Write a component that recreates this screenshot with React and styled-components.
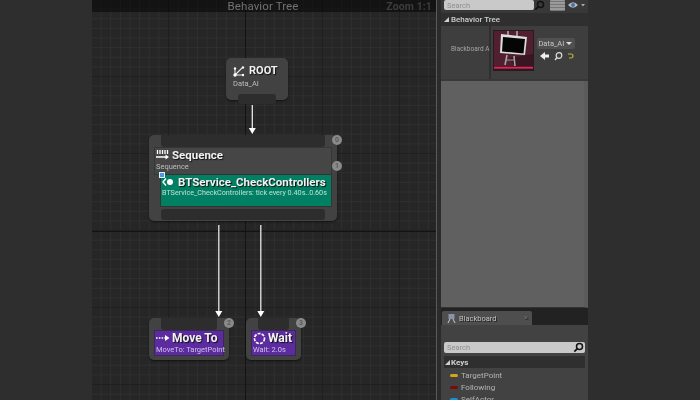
import React from "react";
import styled, { createGlobalStyle } from "styled-components";

const Global = createGlobalStyle`
  html, body { margin: 0; padding: 0; background: #2e2e2e; }
  body { width: 700px; height: 400px; overflow: hidden; font-family: Roboto, "Liberation Sans", sans-serif; }
`;

const Page = styled.div`
  width: 700px; height: 400px; display: flex; overflow: hidden;
  background: #2e2e2e; filter: blur(0.5px);
`;
const Letterbox = styled.div`
  flex: 0 0 ${p => p.$w}px; background: #2e2e2e;
`;
const Graph = styled.div`
  flex: 0 0 344px; position: relative; overflow: hidden;
  background-color: #262626;
  background-image:
    linear-gradient(90deg, #131313 1px, transparent 1px),
    linear-gradient(0deg, #131313 1px, transparent 1px),
    linear-gradient(90deg, #1f1f1f 1px, transparent 1px),
    linear-gradient(0deg, #1f1f1f 1px, transparent 1px),
    linear-gradient(90deg, #2f2f2f 1px, transparent 1px),
    linear-gradient(0deg, #2f2f2f 1px, transparent 1px);
  background-size: 1px 100%, 100% 1px, 77px 77px, 77px 77px, 9.625px 9.625px, 9.625px 9.625px;
  background-position: 153px 0, 0 231px, -1px 0, 0 0, -1px 0, 0 0;
  background-repeat: no-repeat, no-repeat, repeat, repeat, repeat, repeat;
`;
const TitleBar = styled.div`
  height: 12px; background: rgba(0,0,0,.5); position: relative;
  display: flex; justify-content: center; align-items: flex-end;
`;
const GraphTitle = styled.div`
  font-size: 11.5px; line-height: 14px; color: #727272; letter-spacing: .1px; margin-bottom: -1px;
  transform: translateX(-1px);
`;
const ZoomLabel = styled.div`
  position: absolute; right: 4px; top: 0; font-size: 10.5px; line-height: 14px; font-weight: 700;
  color: #3c3c3c; letter-spacing: .1px;
`;
const Wires = styled.svg`
  position: absolute; inset: 0; width: 344px; height: 400px;
`;
const Node = styled.div`
  position: absolute; left: ${p => p.$x}px; top: ${p => p.$y}px; width: ${p => p.$w}px; height: ${p => p.$h}px;
  background: #424242; border-radius: 5px; box-shadow: 0 1px 2px rgba(0,0,0,.55);
  display: flex; flex-direction: column; align-items: stretch; box-sizing: border-box; padding: 0 5px;
`;
const PinBar = styled.div`
  height: ${p => p.$h}px; margin: 0 7px; background: #2d2d2d; flex: none;
  border-radius: ${p => p.$top ? "0 0 3px 3px" : "3px"};
`;
const Composite = styled.div`
  height: 28px; flex: none; background: #464646; border: 1px solid #363636; box-sizing: border-box;
  padding: 0 0 0 1px;
`;
const TitleRow = styled.div`
  display: flex; align-items: center; gap: ${p => p.$gap || 4}px; height: ${p => p.$h || 14}px;
`;
const NodeTitle = styled.div`
  font-weight: 700; font-size: ${p => p.$size || 12}px; line-height: 14px; color: #f2f2f2; white-space: nowrap;
  text-shadow: 1px 1px 1px #111;
`;
const Sub = styled.div`
  font-size: ${p => p.$size || 7.5}px; line-height: ${p => p.$lh || 9}px; color: ${p => p.$color || "#bdbdbd"}; white-space: nowrap;
`;
const RootBox = styled.div`
  height: 30px; flex: none; padding: 6px 1px 0 2px;
`;
const Service = styled.div`
  height: 33px; flex: none; margin: -1px 0 2px 6px; background: #007f63; border: 1px solid #333; box-sizing: border-box;
  position: relative; padding-left: 1px;
`;
const Marker = styled.div`
  position: absolute; left: -2px; top: -3px; width: 4px; height: 4px; background: #5f8fe8; border: 0.5px solid #cfe;
`;
const Task = styled.div`
  height: 26px; flex: none; background: #5b2b9f; border: 1px solid #392a52; box-sizing: border-box; padding: 0 0 0 1px;
`;
const Badge = styled.div`
  position: absolute; right: ${p => -p.$out}px; top: ${p => p.$top}px; width: 10px; height: 10px; border-radius: 50%;
  background: #8a8a8a; color: #5a5a5a; font-size: 7px; line-height: 10px; text-align: center; font-weight: 700;
`;
const Splitter = styled.div`
  flex: 0 0 5px; background: #2b2b2b; border-left: 1px solid #5a5a5a; box-sizing: border-box;
`;
const Side = styled.div`
  flex: 0 0 147px; display: flex; flex-direction: column; background: #333; overflow: hidden;
`;
const TopRow = styled.div`
  height: 13px; flex: none; display: flex; align-items: flex-start; padding-left: 3px; background: #383838;
`;
const SearchBox = styled.div`
  flex: ${p => p.$w ? `0 0 ${p.$w}px` : 1}; height: ${p => p.$h}px; background: #c9c9c9; border-radius: 2px; box-sizing: border-box;
  display: flex; align-items: center; justify-content: space-between;
  padding: 0 1px 0 3px; color: #8f8f8f; font-size: 7.5px; line-height: 11px;
`;
const MagnifierWrap = styled.svg`
  width: 11px; height: 11px; flex: none;
`;
const GridBtn = styled.div`
  flex: 0 0 15px; height: 11px; margin-left: 5px; background: #9a9a9a; border-radius: 1px;
  background-image: repeating-linear-gradient(0deg, #777 0 1px, transparent 1px 3px);
`;
const EyeWrap = styled.svg`
  width: 20px; height: 8px; margin: 1px 0 0 3px; flex: none;
`;
const SectionHead = styled.div`
  height: 13px; flex: none; background: #2f2f2f; display: flex; align-items: center; gap: 2px; padding-left: 3px;
  font-size: 8px; font-weight: 500; color: #cfcfcf;
`;
const Tri = styled.span`
  width: 0; height: 0; border-style: solid; border-width: 0 0 5px 5px; border-color: transparent transparent #cfcfcf transparent;
  flex: none;
`;
const DetailRow = styled.div`
  height: 53px; flex: none; display: flex; background: #3e3e3e; border-bottom: 2px solid #383838;
`;
const RowLabel = styled.div`
  flex: 0 0 50px; box-sizing: border-box; border-right: 2px solid #2f2f2f; white-space: nowrap;
  font-size: 6.5px; line-height: 10px; color: #a4a4a4; padding: 18px 0 0 10px;
`;
const ThumbWrap = styled.svg`
  width: 41px; height: 41px; margin: 4px 3px 0 2px; flex: none;
`;
const ThumbTools = styled.div`
  display: flex; flex-direction: column; gap: 2px; padding-top: 12px;
`;
const Combo = styled.div`
  width: 38px; height: 11px; background: #505050; border-radius: 2px; display: flex; align-items: center; justify-content: space-between;
  font-size: 7.5px; color: #c8c8c8; padding: 0 3px 0 1px; box-sizing: border-box;
`;
const ComboArrow = styled.span`
  width: 0; height: 0; border-left: 3px solid transparent; border-right: 3px solid transparent; border-top: 3px solid #ddd;
`;
const ToolIcons = styled.svg`
  width: 38px; height: 10px;
`;
const Blank = styled.div`
  flex: 0 0 227px; background: #606060; border-right: 4px solid #5b5b5b; box-sizing: border-box;
  border-bottom: 1px solid #333;
`;
const TabStrip = styled.div`
  height: 17px; flex: none; background: #222; display: flex; align-items: flex-end; padding-left: 1px;
`;
const Tab = styled.div`
  width: 90px; height: 14px; background: #4e4e4e; border-radius: 2px 2px 0 0; display: flex; align-items: center; gap: 3px;
  padding: 0 4px 0 5px; box-sizing: border-box; font-size: 7.5px; color: #c2c2c2; text-shadow: 1px 1px 0 #222;
`;
const TabClose = styled.span`
  margin-left: auto; color: #6c6c6c; font-size: 8px; line-height: 10px;
`;
const Board = styled.div`
  flex: 1; background: #424242; padding: 17px 3px 0 3px; display: flex; flex-direction: column; overflow: hidden;
`;
const KeysHead = styled(SectionHead)`
  margin-top: 3px; height: 12px; font-weight: 700; padding-left: 1px; gap: 1px;
`;
const KeyList = styled.div`
  display: flex; flex-direction: column; padding: 0 0 0 6px; margin-top: 1px;
`;
const KeyRow = styled.div`
  height: 12px; display: flex; align-items: center; gap: 3px; font-size: 8px; color: #b4b4b4; flex: none;
`;
const KeyPill = styled.span`
  width: 8px; height: 3px; background: ${p => p.$c}; border-radius: 1.5px; flex: none;
`;

const Magnifier = () => (
  <MagnifierWrap viewBox="0 0 11 11">
    <circle cx="6.5" cy="4.5" r="3" fill="none" stroke="#111" strokeWidth="1.5" />
    <path d="M4.3 6.7 1.3 9.7" stroke="#111" strokeWidth="1.8" />
  </MagnifierWrap>
);

const Arrow = ({ x, y1, y2 }) => (
  <g>
    <line x1={x} x2={x} y1={y1} y2={y2 - 5} stroke="#e8e8e8" strokeWidth="1.3" />
    <path d={`M${x - 3.5} ${y2 - 6} H${x + 3.5} L${x} ${y2} Z`} fill="#fff" />
  </g>
);

const RootIcon = () => (
  <svg width="12" height="12" viewBox="0 0 12 12" style={{ flex: "none" }}>
    <path d="M2 10 9 3M2 10h7M2 10V4" stroke="#e8e8e8" strokeWidth="1.1" fill="none" />
    <circle cx="2" cy="10" r="1.7" fill="#fff" /><circle cx="10" cy="2.5" r="1.2" fill="#fff" /><circle cx="10" cy="10" r="1.2" fill="#fff" /><circle cx="2" cy="3.5" r="1.2" fill="#fff" />
  </svg>
);
const SeqIcon = () => (
  <svg width="14" height="12" viewBox="0 0 14 12" style={{ flex: "none" }}>
    <path d="M1.5 1v4M4 1v4M6.5 1v4M9 1v4M11.5 1v4" stroke="#fff" strokeWidth="1.3" />
    <path d="M0 8h10" stroke="#fff" strokeWidth="1.5" />
    <path d="M9.5 5.500 13 8l-3.500 2.500Z" fill="#fff" />
  </svg>
);
const ServiceIcon = () => (
  <svg width="12" height="10" viewBox="0 0 12 10" style={{ flex: "none" }}>
    <path d="M4 1.500 1 5l3 3.500" stroke="#fff" strokeWidth="1.4" fill="none" />
    <circle cx="8" cy="5" r="3" fill="#fff" />
  </svg>
);
const MoveIcon = () => (
  <svg width="14" height="8" viewBox="0 0 14 8" style={{ flex: "none" }}>
    <path d="M0 4h9" stroke="#fff" strokeWidth="1.4" strokeDasharray="1.6 1.2" />
    <path d="M9 1 13.500 4 9 7Z" fill="#fff" />
  </svg>
);
const WaitIcon = () => (
  <svg width="13" height="13" viewBox="0 0 13 13" style={{ flex: "none" }}>
    <circle cx="6.5" cy="6.5" r="5" stroke="#fff" strokeWidth="1.6" fill="none" strokeDasharray="3 1.2" />
  </svg>
);

const Thumb = () => (
  <ThumbWrap viewBox="0 0 41 41">
    <rect width="41" height="41" fill="#2a1a1e" />
    <rect x="1" y="1" width="39" height="38" fill="#521f30" />
    <path d="M16 28 40 24V36H22Z" fill="#3a1522" />
    <path d="M15 1v5M24 1v5" stroke="#bbb" strokeWidth="1.4" />
    <path d="M8 4 34 7 32 25 7 23Z" fill="#ddd" />
    <path d="M10 7 32 9 30.500 23.500 9 21.500Z" fill="#050505" />
    <path d="M14 25 12 35M21 26 22 36" stroke="#aaa" strokeWidth="1.5" />
    <path d="M13 30h9" stroke="#999" strokeWidth="1" />
    <rect x="1" y="37" width="39" height="1.5" fill="#ef1f5e" />
  </ThumbWrap>
);

export default function App() {
  return (
    <Page>
      <Global />
      <Letterbox $w={92} />
      <Graph>
        <TitleBar>
          <GraphTitle>Behavior Tree</GraphTitle>
          <ZoomLabel>Zoom 1:1</ZoomLabel>
        </TitleBar>
        <Wires viewBox="0 0 344 400">
          <Arrow x={160.3} y1={105} y2={134} />
          <Arrow x={126.8} y1={225} y2={317} />
          <Arrow x={168.8} y1={225} y2={317} />
        </Wires>

        <Node $x={134} $y={58} $w={62} $h={42}>
          <RootBox>
            <TitleRow $gap={4}>
              <RootIcon />
              <NodeTitle $size={11}>ROOT</NodeTitle>
            </TitleRow>
            <Sub $lh={11}>Data_AI</Sub>
          </RootBox>
          <PinBar $h={10} />
        </Node>

        <Node $x={57} $y={135} $w={188} $h={86}>
          <PinBar $h={12} $top />
          <Composite>
            <TitleRow $gap={2} $h={14}>
              <SeqIcon />
              <NodeTitle $size={11.5}>Sequence</NodeTitle>
            </TitleRow>
            <Sub>Sequence</Sub>
          </Composite>
          <Service>
            <Marker />
            <TitleRow $gap={4} $h={13}>
              <ServiceIcon />
              <NodeTitle $size={11.5}>BTService_CheckControllers</NodeTitle>
            </TitleRow>
            <Sub $size={7.2} $color="#bfe0d5">BTService_CheckControllers: tick every 0.40s..0.60s</Sub>
          </Service>
          <PinBar $h={11} />
          <Badge $out={5} $top={0}>0</Badge>
          <Badge $out={5} $top={26}>1</Badge>
        </Node>

        <Node $x={57} $y={318} $w={80} $h={42}>
          <PinBar $h={12} $top />
          <Task>
            <TitleRow $gap={2} $h={14}>
              <MoveIcon />
              <NodeTitle>Move To</NodeTitle>
            </TitleRow>
            <Sub $color="#d2c0ea">MoveTo: TargetPoint</Sub>
          </Task>
          <Badge $out={5} $top={0}>2</Badge>
        </Node>

        <Node $x={154} $y={318} $w={55} $h={42}>
          <PinBar $h={12} $top />
          <Task>
            <TitleRow $gap={2} $h={14}>
              <WaitIcon />
              <NodeTitle>Wait</NodeTitle>
            </TitleRow>
            <Sub $color="#d2c0ea">Wait: 2.0s</Sub>
          </Task>
          <Badge $out={5} $top={0}>3</Badge>
        </Node>
      </Graph>
      <Splitter />
      <Side>
        <TopRow>
          <SearchBox $w={90} $h={10}>
            <span>Search</span>
          </SearchBox>
          <Magnifier />
          <GridBtn />
          <EyeWrap viewBox="0 0 20 8">
            <path d="M0 4Q5-1.500 10 4 5 9.500 0 4Z" fill="#b4bcc8" />
            <circle cx="5" cy="4" r="2" fill="#4f6f9f" />
            <path d="M13 3h4l-2 2.500Z" fill="#aaa" />
          </EyeWrap>
        </TopRow>
        <SectionHead><Tri />Behavior Tree</SectionHead>
        <DetailRow>
          <RowLabel>Blackboard A</RowLabel>
          <Thumb />
          <ThumbTools>
            <Combo>Data_AI<ComboArrow /></Combo>
            <ToolIcons viewBox="0 0 38 10">
              <path d="M3 5 8 1v2.500h4v3H8V9Z" fill="#eee" />
              <circle cx="22" cy="4.500" r="2.800" fill="none" stroke="#ddd" strokeWidth="1.200" />
              <path d="M20 6.500 18 9" stroke="#ddd" strokeWidth="1.300" />
              <path d="M31 3h3a2 2 0 0 1 0 4h-2" fill="none" stroke="#b5b23c" strokeWidth="1.200" />
            </ToolIcons>
          </ThumbTools>
        </DetailRow>
        <Blank />
        <TabStrip>
          <Tab>
            <svg width="9" height="10" viewBox="0 0 9 10" style={{ flex: "none" }}>
              <rect x="1.500" y="1" width="6" height="5" fill="#8a93a8" />
              <path d="M3 6 1 10M6 6l2 4" stroke="#ccc" strokeWidth="1" />
            </svg>
            Blackboard
            <TabClose>×</TabClose>
          </Tab>
        </TabStrip>
        <Board>
          <SearchBox $h={11}>
            <span>Search</span>
            <Magnifier />
          </SearchBox>
          <KeysHead><Tri />Keys</KeysHead>
          <KeyList>
            <KeyRow><KeyPill $c="#d6a51c" />TargetPoint</KeyRow>
            <KeyRow><KeyPill $c="#7a0c0c" />Following</KeyRow>
            <KeyRow><KeyPill $c="#1a8fd8" />SelfActor</KeyRow>
          </KeyList>
        </Board>
      </Side>
      <Letterbox $w={112} />
    </Page>
  );
}
